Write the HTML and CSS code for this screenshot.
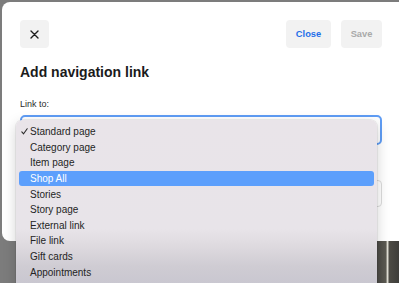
FILE: index.html
```html
<!DOCTYPE html>
<html>
<head>
<meta charset="utf-8">
<link rel="stylesheet" href="styles.css">
</head>
<body>
<div class="page">
  <div class="modal">
    <div class="header">
      <button class="btn icon-btn" aria-label="Close">
        <svg width="9" height="9" viewBox="0 0 9 9"><path d="M1 1L8 8M8 1L1 8" stroke="#1e1e1e" stroke-width="1.4" stroke-linecap="round"/></svg>
      </button>
      <div class="actions">
        <button class="btn close-btn">Close</button>
        <button class="btn save-btn">Save</button>
      </div>
    </div>
    <h1 class="title">Add navigation link</h1>
    <div class="label">Link to:</div>
    <div class="select"></div>
    <div class="field"></div>
  </div>
  <div class="below">
    <div class="spacer"></div>
    <div class="photo"></div>
  </div>
</div>
<div class="menu">
  <div class="item"><span class="mark"><svg width="7" height="7" viewBox="0 0 7 7"><path d="M0.8 3.8L2.6 5.8L6.2 0.8" fill="none" stroke="#2a2a2a" stroke-width="1.1" stroke-linecap="round" stroke-linejoin="round"/></svg></span>Standard page</div>
  <div class="item"><span class="mark"></span>Category page</div>
  <div class="item"><span class="mark"></span>Item page</div>
  <div class="item active"><span class="mark"></span>Shop All</div>
  <div class="item"><span class="mark"></span>Stories</div>
  <div class="item"><span class="mark"></span>Story page</div>
  <div class="item"><span class="mark"></span>External link</div>
  <div class="item"><span class="mark"></span>File link</div>
  <div class="item"><span class="mark"></span>Gift cards</div>
  <div class="item"><span class="mark"></span>Appointments</div>
</div>
</body>
</html>
```
FILE: styles.css
```css
* { box-sizing: border-box; }
html, body {
  margin: 0;
  padding: 0;
  width: 399px;
  height: 283px;
  overflow: hidden;
}
body {
  background: #7c7c7c;
  font-family: "Liberation Sans", Arial, sans-serif;
  position: relative;
}
.page {
  padding: 2px 0 0 2px;
}
.modal {
  background: #ffffff;
  height: 239px;
  border-radius: 8px 0 0 8px;
  padding: 18px 17px 0 18px;
  display: flex;
  flex-direction: column;
}
.header {
  display: flex;
  justify-content: space-between;
  align-items: center;
  height: 28px;
}
.actions {
  display: flex;
  gap: 10px;
}
.btn {
  border: none;
  background: #f2f2f2;
  border-radius: 4px;
  height: 28px;
  font-family: "Liberation Sans", Arial, sans-serif;
  font-weight: 700;
  font-size: 9.3px;
  padding: 0;
  display: flex;
  align-items: center;
  justify-content: center;
}
.icon-btn { width: 29px; }
.close-btn { width: 45px; color: #1f6fe9; }
.save-btn { width: 41px; color: #a9a9a9; }
.title {
  margin: 16px 0 0 0;
  font-size: 14px;
  line-height: 17px;
  font-weight: 700;
  color: #1b1b1b;
}
.label {
  margin-top: 18px;
  font-size: 9px;
  line-height: 11px;
  color: #2b2b2b;
}
.select {
  margin-top: 5px;
  height: 30px;
  border: 2px solid #5f9df5;
  border-radius: 5px;
}
.field {
  margin-top: 35px;
  height: 27px;
  border: 1px solid #dcdcdc;
  border-radius: 4px;
}
.below {
  display: flex;
  height: 42px;
  margin-left: -2px;
}
.spacer { flex: 1; }
.photo {
  width: 22px;
  background: linear-gradient(90deg, #4a4945 0%, #5c5a52 40%, #e4e2d8 48%, #4d4b45 56%, #3e3d3a 100%);
}
.menu {
  position: absolute;
  left: 16px;
  top: 120px;
  width: 361px;
  height: 170px;
  border-radius: 6px;
  background: linear-gradient(180deg, #e9e4e9 0%, #e8e4e9 64%, #dedadf 74%, #cfccd3 86%, #c7c5cf 100%);
  box-shadow: 0 0 0 0.5px rgba(0,0,0,0.12), 0 4px 14px rgba(0,0,0,0.18);
  padding: 4px 3px 0 3px;
}
.item {
  display: flex;
  align-items: center;
  height: 15.6px;
  padding-left: 2px;
  font-size: 10px;
  color: #242424;
  border-radius: 3px;
}
.mark {
  width: 9px;
  display: flex;
  align-items: center;
}
.item.active {
  background: #5c9ffc;
  color: #ffffff;
}
```
